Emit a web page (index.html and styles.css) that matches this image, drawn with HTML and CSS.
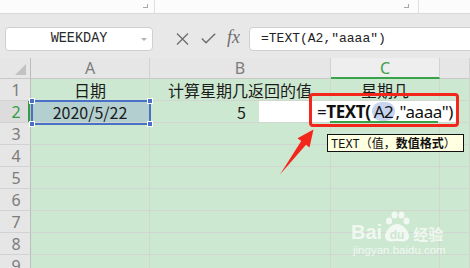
FILE: index.html
```html
<!DOCTYPE html>
<html lang="zh">
<head>
<meta charset="utf-8">
<title>WPS TEXT</title>
<link rel="stylesheet" href="styles.css">
</head>
<body>
<div class="app">
  <div class="ribbon">
    <div class="rgroup g1"><span class="launcher"></span></div>
    <div class="rgroup g2"><span class="launcher"></span></div>
    <div class="rgroup g3"></div>
  </div>

  <div class="fbar">
    <div class="namebox"><span class="nametext">WEEKDAY</span><span class="caret"></span></div>
    <svg class="ico ico-x" width="13" height="12" viewBox="0 0 13 12"><path d="M1 0.5 L12 11.5 M12 0.5 L1 11.5" stroke="#6d6d6d" stroke-width="1.3" fill="none"/></svg>
    <svg class="ico ico-ok" width="15" height="11" viewBox="0 0 15 11"><path d="M0.8 5.5 L5 9.8 L14.2 0.8" stroke="#6d6d6d" stroke-width="1.4" fill="none"/></svg>
    <span class="fx">fx</span>
    <div class="finput">=TEXT(A2,″aaaa″)</div>
  </div>

  <div class="sheet">
    <div class="hd corner"><span class="tri"></span></div>
    <div class="hd col">A</div>
    <div class="hd col">B</div>
    <div class="hd col active">C</div>
    <div class="hd col"></div>

    <div class="hd rn">1</div>
    <div class="cell center">日期</div>
    <div class="cell center">计算星期几返回的值</div>
    <div class="cell center">星期几</div>
    <div class="cell"></div>

    <div class="hd rn rn-active">2</div>
    <div class="cell center sel">2020/5/22</div>
    <div class="cell num">5</div>
    <div class="cell"></div>
    <div class="cell"></div>

    <div class="hd rn">3</div><div class="cell"></div><div class="cell"></div><div class="cell"></div><div class="cell"></div>
    <div class="hd rn">4</div><div class="cell"></div><div class="cell"></div><div class="cell"></div><div class="cell"></div>
    <div class="hd rn">5</div><div class="cell"></div><div class="cell"></div><div class="cell"></div><div class="cell"></div>
    <div class="hd rn">6</div><div class="cell"></div><div class="cell"></div><div class="cell"></div><div class="cell"></div>
    <div class="hd rn">7</div><div class="cell"></div><div class="cell"></div><div class="cell"></div><div class="cell"></div>
    <div class="hd rn">8</div><div class="cell"></div><div class="cell"></div><div class="cell"></div><div class="cell"></div>
    <div class="hd rn">9</div><div class="cell"></div><div class="cell"></div><div class="cell"></div><div class="cell"></div>
  </div>

  <!-- overlays -->
  <div class="selbox">
    <span class="h h-tl"></span><span class="h h-tr"></span><span class="h h-bl"></span><span class="h h-br"></span>
  </div>

  <div class="editor"><span class="eq">=</span><b class="fn">TEXT(</b><span class="ref">A2</span><span class="rest">,"aaaa")</span></div>
  <div class="active-line"></div>
  <div class="redbox"></div>

  <div class="tip"><span class="tip-fn">TEXT</span>（值，<b>数值格式</b>）</div>

  <svg class="arrow" width="50" height="60" viewBox="270 125 50 60">
    <polygon points="313.5,129.5 309.5,147.5 306,144.8 280,174.5 301.2,141 297.5,138.2" fill="#f3261c"/>
  </svg>

  <div class="watermark">
    <div class="wm-top">
      <span class="wm-bai">Bai</span>
      <svg class="paw" width="28" height="33" viewBox="0 0 28 33">
        <ellipse cx="6" cy="10" rx="3" ry="3.6" fill="rgba(255,255,255,0.72)"/>
        <ellipse cx="11.5" cy="4" rx="3" ry="3.6" fill="rgba(255,255,255,0.72)"/>
        <ellipse cx="18.5" cy="4" rx="3" ry="3.6" fill="rgba(255,255,255,0.72)"/>
        <ellipse cx="23.5" cy="10" rx="3" ry="3.6" fill="rgba(255,255,255,0.72)"/>
        <path d="M14 13 C 20 13, 26 20, 26 25 C 26 31, 20 31, 14 30 C 8 31, 2 31, 2 25 C 2 20, 8 13, 14 13 Z" fill="rgba(255,255,255,0.72)"/>
        <text x="14" y="28" text-anchor="middle" font-family="Liberation Sans, sans-serif" font-size="12" font-weight="bold" fill="#cde7d0">du</text>
      </svg>
      <span class="wm-jy">经验</span>
    </div>
    <div class="wm-url">jingyan.baidu.com</div>
  </div>
</div>
</body>
</html>
```
FILE: styles.css
```css
* { box-sizing: border-box; }
html, body { margin: 0; padding: 0; }
body {
  width: 470px;
  height: 268px;
  overflow: hidden;
  background: #cde8d0;
  font-family: "Noto Sans CJK SC", "Noto Sans", sans-serif;
}
.app {
  position: relative;
  width: 470px;
  height: 268px;
  overflow: hidden;
}

/* ribbon strip */
.ribbon {
  display: flex;
  height: 14px;
  background: #fcfcfc;
  border-bottom: 1px solid #dadada;
}
.rgroup {
  display: flex;
  justify-content: flex-end;
  align-items: flex-start;
  border-right: 1px solid #e0e0e0;
}
.g1 { width: 155px; }
.g2 { width: 264px; }
.g3 { flex: 1; border-right: none; }
.launcher {
  width: 5px;
  height: 4px;
  margin: 4px 6px 0 0;
  border-right: 1px solid #a8a8a8;
  border-bottom: 1px solid #a8a8a8;
}
.g2 .launcher { margin-right: 9px; }

/* formula bar */
.fbar {
  display: flex;
  align-items: center;
  height: 44px;
  padding-top: 5px;
  background: #e8e8e8;
}
.namebox {
  position: relative;
  display: flex;
  align-items: center;
  justify-content: center;
  width: 148px;
  height: 24px;
  margin-left: 5px;
  background: #fff;
  border: 1px solid #cfcfcf;
  border-radius: 4px;
  font-family: "Liberation Mono", monospace;
  font-size: 13.5px;
  color: #2a2a2a;
}
.nametext { display: inline-block; transform: scaleY(1.12); }
.caret {
  position: absolute;
  right: 5px;
  top: 10px;
  border-left: 3px solid transparent;
  border-right: 3px solid transparent;
  border-top: 3px solid #b0b0b0;
}
.ico { display: block; }
.ico-x { margin-left: 23px; }
.ico-ok { margin-left: 12px; }
.fx {
  margin-left: 11px;
  font-family: "Liberation Serif", serif;
  font-style: italic;
  font-size: 18px;
  color: #6d6d6d;
  line-height: 1;
  padding-bottom: 3px;
}
.finput {
  flex: 1;
  height: 24px;
  margin-left: 9px;
  margin-right: -8px;
  padding-left: 11px;
  background: #fff;
  border: 1px solid #cfcfcf;
  border-radius: 4px;
  font-family: "Liberation Mono", monospace;
  font-size: 13px;
  line-height: 22px;
  color: #222;
}

/* sheet */
.sheet {
  display: grid;
  grid-template-columns: 31px 119px 181px 109px 1fr;
  grid-template-rows: 21px;
  grid-auto-rows: 22px;
}
.hd {
  background: #e6e6e6;
  border-right: 1px solid #d2d2d2;
  border-bottom: 1px solid #c8c8c8;
  color: #7c7c7c;
  font-size: 16px;
  display: flex;
  align-items: center;
  justify-content: center;
  font-family: "Noto Sans", "Noto Sans CJK SC", sans-serif;
  line-height: 1;
}
.corner { position: relative; border-right: 1px solid #bdbdbd; }
.tri {
  position: absolute;
  right: 4px;
  bottom: 3px;
  width: 0;
  height: 0;
  border-left: 11px solid transparent;
  border-bottom: 11px solid #c2c2c2;
}
.col.active {
  background: #eeeeee;
  color: #3aa24a;
  border-bottom: 2px solid #3aa24a;
}
.rn {
  border-right: 1px solid #bdbdbd;
  border-bottom: 1px solid #d2d2d2;
  justify-content: center;
  padding-left: 2px;
}
.rn-active {
  background: #dcdcdc;
  color: #2f9e44;
  box-shadow: inset -2px 0 0 #2f9e44;
}
.cell {
  border-right: 1px solid #d1d6d1;
  border-bottom: 1px solid #d1d6d1;
  font-size: 16px;
  color: #1b1b1b;
  display: flex;
  align-items: center;
  line-height: 1;
  white-space: nowrap;
  overflow: hidden;
}
.center { justify-content: center; }
.num { justify-content: flex-end; padding-right: 84px; }
.sel { background: #b3cfcf; }

/* overlays */
.selbox {
  position: absolute;
  left: 31px;
  top: 100px;
  width: 120px;
  height: 25px;
  border: 2px solid #4a6fc7;
}
.h {
  position: absolute;
  width: 6px;
  height: 6px;
  background: #4a6fc7;
  border: 1px solid #fff;
}
.h-tl { left: -4px; top: -4px; }
.h-tr { right: -4px; top: -4px; }
.h-bl { left: -4px; bottom: -4px; }
.h-br { right: -4px; bottom: -4px; }

.editor {
  position: absolute;
  left: 259px;
  top: 101px;
  width: 198px;
  height: 21px;
  background: #fff;
  padding-left: 58px;
  display: flex;
  align-items: center;
  font-family: "Noto Sans", "Noto Sans CJK SC", sans-serif;
  font-size: 17px;
  letter-spacing: -0.4px;
  line-height: 1;
  color: #111;
  white-space: nowrap;
}
.fn { font-weight: bold; }
.ref {
  background: #c6d4ef;
  border-radius: 9px;
  padding: 1px 2px;
  margin-left: 1px;
}
.active-line {
  position: absolute;
  left: 330px;
  top: 121px;
  width: 108px;
  height: 2px;
  background: #3aa24a;
}
.redbox {
  position: absolute;
  left: 309px;
  top: 93px;
  width: 150px;
  height: 34px;
  border: 3px solid #f3261c;
  border-radius: 4px;
}
.tip {
  position: absolute;
  left: 327px;
  top: 134px;
  height: 18px;
  width: 137px;
  padding-left: 3px;
  background: #ffffe1;
  border: 1px solid #111;
  font-size: 12px;
  line-height: 16px;
  color: #111;
  white-space: nowrap;
}
.tip-fn { font-family: "Liberation Mono", monospace; font-size: 12px; }
.tip b { font-weight: bold; }
.arrow {
  position: absolute;
  left: 270px;
  top: 125px;
}
.watermark {
  position: absolute;
  left: 351px;
  top: 211px;
  color: rgba(255, 255, 255, 0.72);
}
.wm-top {
  display: flex;
  align-items: flex-end;
}
.wm-bai {
  font-family: "Liberation Sans", sans-serif;
  font-weight: bold;
  font-size: 20px;
  line-height: 1;
  margin-bottom: 2px;
}
.paw { display: block; margin-left: 1px; }
.wm-jy {
  font-size: 15px;
  font-weight: bold;
  line-height: 1;
  margin-left: 2px;
  margin-bottom: 3px;
}
.wm-url {
  font-family: "Liberation Sans", sans-serif;
  font-size: 11.5px;
  line-height: 1;
  margin-top: 1px;
  margin-left: 2px;
}
```
